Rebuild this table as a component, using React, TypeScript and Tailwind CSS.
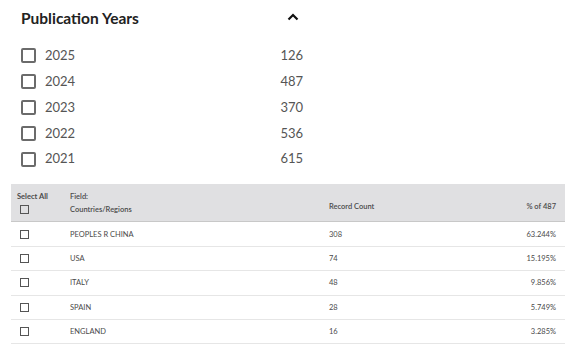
import React from "react";

const years = [
  { year: "2025", count: 126 },
  { year: "2024", count: 487 },
  { year: "2023", count: 370 },
  { year: "2022", count: 536 },
  { year: "2021", count: 615 },
];

const rows = [
  { name: "PEOPLES R CHINA", count: 308, pct: "63.244%" },
  { name: "USA", count: 74, pct: "15.195%" },
  { name: "ITALY", count: 48, pct: "9.856%" },
  { name: "SPAIN", count: 28, pct: "5.749%" },
  { name: "ENGLAND", count: 16, pct: "3.285%" },
];

function ChevronUp() {
  return (
    <svg width="12" height="8" viewBox="0 0 12 8" aria-hidden>
      <path d="M1.5 6.5 L6 2 L10.5 6.5" fill="none" stroke="#111" strokeWidth="2.2" />
    </svg>
  );
}

export default function App() {
  return (
    <div className="w-[579px] h-[347px] bg-white font-['Lato',sans-serif] overflow-hidden">
      {/* facet: publication years */}
      <div className="w-[282px] ml-[21px] pt-[8px]">
        <div className="flex items-center justify-between h-[22px]">
          <h3 className="text-[15.5px] font-bold text-[#222]">Publication Years</h3>
          <span className="mr-[4px] mt-[-4px]">
            <ChevronUp />
          </span>
        </div>
        <ul className="mt-[13px] flex flex-col">
          {years.map((y) => (
            <li key={y.year} className="flex items-center h-[25.8px]">
              <span className="w-[15px] h-[15px] border-2 border-[#6b6b6b] rounded-[2px]" />
              <span className="ml-[9px] text-[13px] text-[#555]">{y.year}</span>
              <span className="ml-auto text-[13px] text-[#555]">{y.count}</span>
            </li>
          ))}
        </ul>
      </div>

      {/* analyze results table */}
      <table className="mt-[12px] ml-[11px] w-[554px] border-collapse text-[7.5px] text-[#4a4a4a]">
        <thead>
          <tr className="bg-[#e0e0e2] h-[38px] border-b border-[#c8c8c8]">
            <th className="w-[59px] pl-[6px] text-left align-top pt-[7px] font-bold">
              <div>Select All</div>
              <span className="block ml-[3px] mt-[3px] w-[9px] h-[9px] border border-[#555]" />
            </th>
            <th className="w-[259px] text-left align-top pt-[7px] font-semibold">
              <div>Field:</div>
              <div className="mt-[2px]">Countries/Regions</div>
            </th>
            <th className="text-left align-bottom pb-[9px] font-semibold">Record Count</th>
            <th className="text-right align-bottom pb-[9px] pr-[9px] font-semibold">% of 487</th>
          </tr>
        </thead>
        <tbody>
          {rows.map((r) => (
            <tr key={r.name} className="h-[24.4px] border-b border-[#e6e6e6]">
              <td className="pl-[9px]">
                <span className="block w-[9px] h-[9px] border border-[#555]" />
              </td>
              <td>{r.name}</td>
              <td>{r.count}</td>
              <td className="text-right pr-[9px]">{r.pct}</td>
            </tr>
          ))}
        </tbody>
      </table>
    </div>
  );
}
